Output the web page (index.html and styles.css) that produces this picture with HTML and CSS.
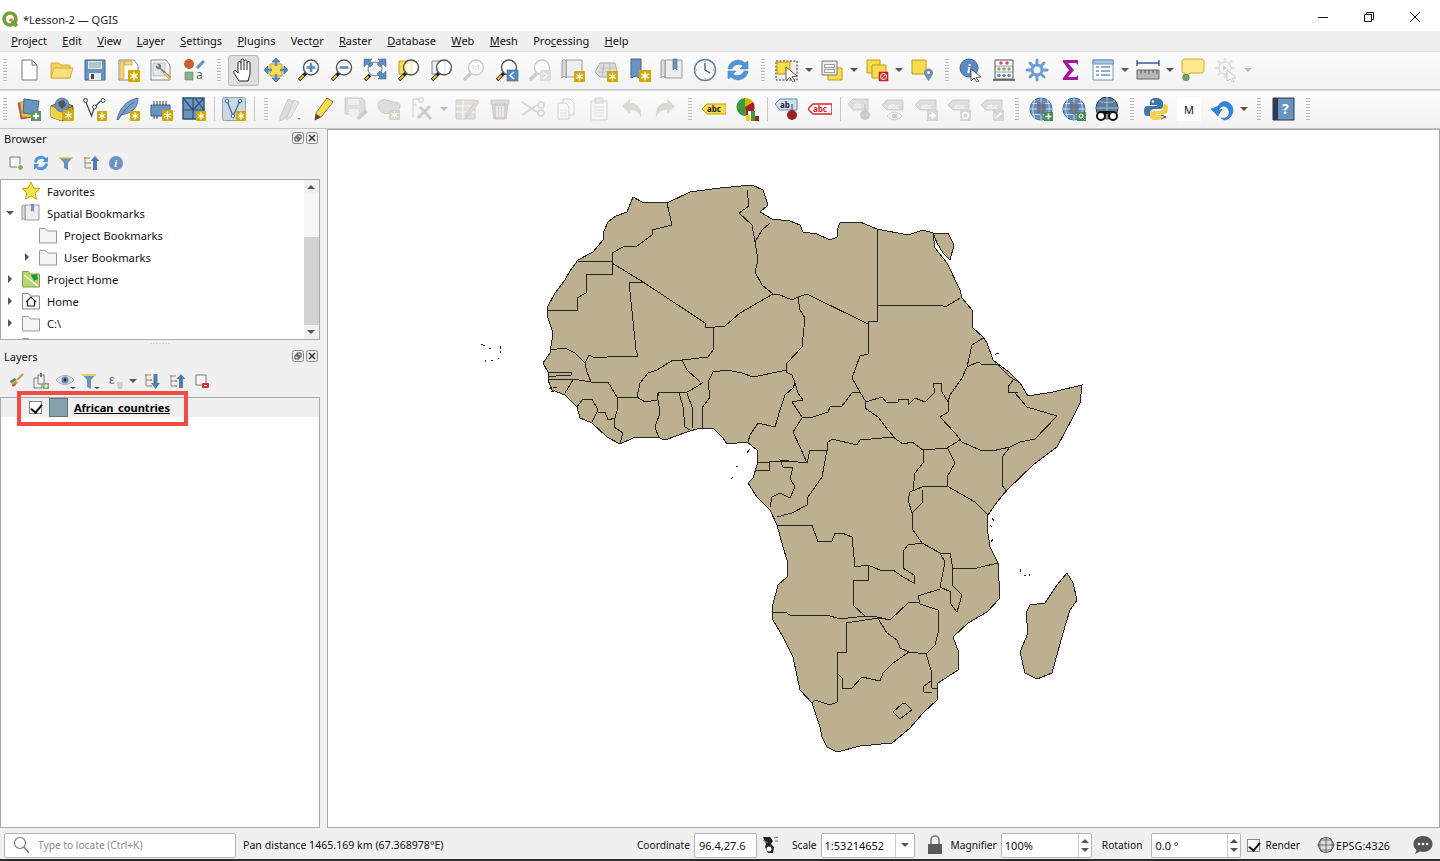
FILE: index.html
```html
<!DOCTYPE html>
<html lang="en">

<head>
    <meta charset="UTF-8">
    <title>*Lesson-2 — QGIS</title>
    <link rel="stylesheet" href="styles.css">
</head>

<body>
    <svg class="defs" width="0" height="0">
        <symbol id="sun" viewBox="0 0 11 11">
            <rect width="11" height="11" rx="1" fill="#d2a800" />
            <path d="M5.5 1.5v8M2 3.5l7 4M9 3.5l-7 4" stroke="#fff" stroke-width="1.3" />
        </symbol>
        <symbol id="mag" viewBox="0 0 24 24">
            <path d="M2 22l7-7" stroke="#222" stroke-width="3.4" />
            <path d="M2.6 21.4l4-4" stroke="#f0c832" stroke-width="2" />
            <circle cx="14" cy="9.500" r="7.500" fill="#fff" fill-opacity=".75" stroke="#555" stroke-width="1.400" />
        </symbol>
        <symbol id="magoff" viewBox="0 0 24 24">
            <path d="M2 22l7-7" stroke="#ccc" stroke-width="3.400" />
            <circle cx="14" cy="9.500" r="7.500" fill="#fafafa" stroke="#ccc" stroke-width="1.400" />
        </symbol>
        <symbol id="globe" viewBox="0 0 24 24">
            <circle cx="12" cy="12" r="11" fill="#5f8fc4" stroke="#4a6f9a" />
            <path d="M1 12h22M3 6.500h18M3 17.500h18M12 1v22M6 3c-3 5-3 13 0 18M18 3c3 5 3 13 0 18" stroke="#e2e8ee" stroke-width=".8" fill="none" />
            <path d="M8 5l8 1 1 6-4 7-5-4z" fill="#666" fill-opacity=".7" />
        </symbol>
        <symbol id="abcoff" viewBox="0 0 24 24">
            <path d="M1 8l5-5h16v10H6z" fill="#ddd" stroke="#ccc" />
        </symbol>
    </svg>

    <div class="app">
        <header class="titlebar">
            <svg class="app-logo" width="17" height="17" viewBox="0 0 17 17">
                <circle cx="8" cy="8" r="6" fill="none" stroke="#6ea33c" stroke-width="3.600" />
                <path d="M10 10l5 5" stroke="#6ea33c" stroke-width="3.400" />
                <circle cx="9" cy="9" r="1.800" fill="#ee7913" />
            </svg>
            <span class="title-text">*Lesson-2 — QGIS</span>
            <div class="window-btns">
                <svg width="12" height="12" viewBox="0 0 12 12"><path d="M1 6.500h10" stroke="#111" /></svg>
                <svg width="12" height="12" viewBox="0 0 12 12"><path d="M1.500 3.500h7v7h-7zM3.500 3.500v-2h7v7h-2" fill="none" stroke="#111" /></svg>
                <svg width="12" height="12" viewBox="0 0 12 12"><path d="M1 1l10 10M11 1L1 11" stroke="#111" /></svg>
            </div>
        </header>

        <nav class="menubar">
            <span><u>P</u>roject</span>
            <span><u>E</u>dit</span>
            <span><u>V</u>iew</span>
            <span><u>L</u>ayer</span>
            <span><u>S</u>ettings</span>
            <span><u>P</u>lugins</span>
            <span>Vect<u>o</u>r</span>
            <span><u>R</u>aster</span>
            <span><u>D</u>atabase</span>
            <span><u>W</u>eb</span>
            <span><u>M</u>esh</span>
            <span>Pro<u>c</u>essing</span>
            <span><u>H</u>elp</span>
        </nav>

        <div class="toolbar">
            <i class="grip"></i>
            <b class="tool"><svg viewBox="0 0 24 24"><path d="M5 2h10l5 5v15H5z" fill="#fff" stroke="#777" /><path d="M15 2v5h5" fill="none" stroke="#777" /></svg></b>
            <b class="tool"><svg viewBox="0 0 24 24"><path d="M1 20V5h8l2 2h9v13z" fill="#f3cf5f" stroke="#d6ae3c" /><path d="M1 20l3-10h19l-3 10z" fill="#fbdf7e" stroke="#d6ae3c" /></svg></b>
            <b class="tool"><svg viewBox="0 0 24 24"><path d="M2 2h20v20H2z" fill="#6b93c0" stroke="#3d6793" rx="2" /><path d="M5 3h14v8H5z" fill="#dfe6ee" /><path d="M6 5h12M6 7h12M6 9h12" stroke="#8aa" /><path d="M6 15h12v7H6z" fill="#e8e8e8" /><path d="M8 16h3v5H8z" fill="#444" /></svg></b>
            <b class="tool"><svg viewBox="0 0 24 24"><path d="M3 2h15l4 5v15H3z" fill="#fff" stroke="#888" /><path d="M4 3h4v18H4zM8 3h8v4H8z" fill="#f2d679" stroke="#c8a642" stroke-width=".7" /><use href="#sun" x="12" y="12" width="12" height="12" /></svg></b>
            <b class="tool"><svg viewBox="0 0 24 24"><path d="M2 2h15l4 5v15H2z" fill="#f8f8f8" stroke="#888" /><path d="M4 5h12v13H4z" fill="#dfe6ee" stroke="#9ab" stroke-width=".6" /><path d="M7 7a3 3 0 0 0 4 4l9 10 2-2-10-9a3 3 0 0 0-4-4l2 2-1 1z" fill="#777" /><path d="M15 15l6 6" stroke="#e6c44d" stroke-width="2.400" /></svg></b>
            <b class="tool"><svg viewBox="0 0 24 24"><circle cx="7" cy="6" r="5" fill="#c8602a" /><path d="M15 10l7-7" stroke="#5f8fc4" stroke-width="3" /><path d="M3 14h8v8H3z" fill="#8cb184" stroke="#678" stroke-width=".6" /><text x="14" y="21" class="icon-text-big" fill="#666">a</text></svg></b>
            <i class="grip"></i>
            <b class="tool active"><svg viewBox="0 0 24 24"><path d="M8 23l-5-8c-1-2 1-3 2-2l2 2V5c0-2 3-2 3 0V2.500c0-2 3-2 3 0V3.500c0-2 3-2 3 0V5c0-2 3-2 3 0v11l-2 7z" fill="#fff" stroke="#222" stroke-linejoin="round" /><path d="M10 5v7M13 4v8M16 5v7" stroke="#222" /></svg></b>
            <b class="tool"><svg viewBox="0 0 24 24"><path d="M6 6h12v12H6z" fill="#f7dc4d" stroke="#bf9d12" /><path d="M12 0l4 4h-8zM12 24l-4-4h8zM0 12l4-4v8zM24 12l-4 4v-8z" fill="#5c8bc0" stroke="#36618f" stroke-width=".7" /><path d="M12 4v4M12 16v4M4 12h4M16 12h4" stroke="#5c8bc0" stroke-width="2.400" /></svg></b>
            <b class="tool"><svg viewBox="0 0 24 24"><use href="#mag" width="24" height="24" /><path d="M14 5v9M9.500 9.500h9" stroke="#5c8bc0" stroke-width="2.600" /></svg></b>
            <b class="tool"><svg viewBox="0 0 24 24"><use href="#mag" width="24" height="24" /><path d="M9.500 9.500h9" stroke="#5c8bc0" stroke-width="2.600" /></svg></b>
            <b class="tool"><svg viewBox="0 0 24 24"><circle cx="12" cy="11" r="7" fill="#eef1f4" stroke="#777" /><path d="M2 22l5-5" stroke="#222" stroke-width="3.400" /><path d="M2.600 21.400l3-3" stroke="#f0c832" stroke-width="2" /><path d="M1 1h8L7 3l3 3-3 3-3-3-3 3zM23 1h-8l2 2-3 3 3 3 3-3 3 3zM23 21h-8l2-2-3-3 3-3 3 3 3-3z" fill="#5c8bc0" stroke="#36618f" stroke-width=".5" /></svg></b>
            <b class="tool"><svg viewBox="0 0 24 24"><path d="M3 3h13v13H3z" fill="#f7dc4d" stroke="#bf9d12" /><use href="#mag" x="1" width="24" height="24" /></svg></b>
            <b class="tool"><svg viewBox="0 0 24 24"><path d="M3 3h13v13H3z" fill="#eee" stroke="#888" /><use href="#mag" x="1" width="24" height="24" /></svg></b>
            <b class="tool"><svg viewBox="0 0 24 24"><use href="#magoff" width="24" height="24" /><text x="9" y="12" class="icon-text" fill="#ccc">1:1</text></svg></b>
            <b class="tool"><svg viewBox="0 0 24 24"><use href="#mag" width="24" height="24" /><path d="M12 12h11v11H12z" fill="#5c8bc0" stroke="#36618f" stroke-width=".6" /><path d="M19 14l-4 3.500 4 3.500" fill="none" stroke="#fff" stroke-width="1.500" /></svg></b>
            <b class="tool"><svg viewBox="0 0 24 24"><use href="#magoff" width="24" height="24" /><path d="M12 12h11v11H12z" fill="#ddd" /><path d="M15 14l4 3.500-4 3.500" fill="none" stroke="#fff" stroke-width="1.500" /></svg></b>
            <b class="tool"><svg viewBox="0 0 24 24"><path d="M5 2h16v17H5z" fill="#eee" stroke="#999" /><path d="M1 4c0-3 4-3 4 0v16c0-2-4-2-4 0z" fill="#ddd" stroke="#999" /><use href="#sun" x="13" y="13" width="11" height="11" /></svg></b>
            <b class="tool"><svg viewBox="0 0 24 24"><path d="M1 14l5-9h15l2 9-6 5H6z" fill="#ddd" stroke="#aaa" /><path d="M6 10l15 0M4 14l19 0M10 5l-2 14M16 5v14" stroke="#aaa" stroke-width=".6" /><use href="#sun" x="13" y="13" width="11" height="11" /></svg></b>
            <b class="tool"><svg viewBox="0 0 24 24"><path d="M4 1h10v20l-5-3-5 2z" fill="#6b93c0" stroke="#3d6793" /><use href="#sun" x="12" y="12" width="12" height="12" /></svg></b>
            <b class="tool"><svg viewBox="0 0 24 24"><path d="M5 2h17v18H5z" fill="#eee" stroke="#999" /><path d="M1 4c0-3 4-3 4 0v16c0-2-4-2-4 0z" fill="#ddd" stroke="#999" /><path d="M13 1h4v11l-2-2-2 2z" fill="#6b93c0" stroke="#3d6793" stroke-width=".6" /></svg></b>
            <b class="tool"><svg viewBox="0 0 24 24"><circle cx="12" cy="12" r="10.500" fill="#f6f8fb" stroke="#5e7f9f" stroke-width="1.400" /><path d="M12 5v7l5 3" fill="none" stroke="#444" stroke-width="1.200" /><path d="M12 3v1M12 20v1M3 12h1M20 12h1" stroke="#5e7f9f" /></svg></b>
            <b class="tool"><svg viewBox="0 0 24 24"><path d="M2 11A10 10 0 0 1 19 5l3-2v8h-8l3-3A7 7 0 0 0 6 11z" fill="#4f95d6" stroke="#3a78b4" stroke-width=".5" /><path d="M22 13A10 10 0 0 1 5 19l-3 2v-8h8l-3 3a7 7 0 0 0 11-3z" fill="#4f95d6" stroke="#3a78b4" stroke-width=".5" /></svg></b>
            <i class="grip"></i>
            <b class="tool"><svg viewBox="0 0 24 24"><path d="M1 3h21v19H1z" fill="#eee" stroke="#333" stroke-dasharray="2 1.500" /><path d="M2 4h13v12H2z" fill="#f7dc4d" stroke="#bf9d12" /><path d="M11 9l11 9-5 .5 3 5-2 1-3-5-4 3z" fill="#fff" stroke="#333" stroke-width=".8" /></svg></b>
            <b class="arrow"></b>
            <b class="tool"><svg viewBox="0 0 24 24"><path d="M8 10h14v12H8z" fill="#f7dc4d" stroke="#bf9d12" /><path d="M2 3h15v14H2z" fill="#eee" stroke="#777" /><path d="M4.500 6.500h10v3h-10zM4.500 11.500h10v3h-10z" fill="#fff" stroke="#777" stroke-width=".7" /></svg></b>
            <b class="arrow"></b>
            <b class="tool"><svg viewBox="0 0 24 24"><path d="M2 2h13v13H2z" fill="#f7dc4d" stroke="#bf9d12" /><path d="M7 7h14v13H7z" fill="#f7dc4d" stroke="#bf9d12" /><path d="M14 14h9v9h-9z" fill="#d9252a" stroke="#a11" stroke-width=".5" /><circle cx="18.500" cy="18.500" r="3" fill="none" stroke="#fff" /><path d="M16.500 20.500l4-4" stroke="#fff" /></svg></b>
            <b class="arrow"></b>
            <b class="tool"><svg viewBox="0 0 24 24"><path d="M2 2h14v14H2z" fill="#f7dc4d" stroke="#bf9d12" /><path d="M18.500 23l-4-6a4.500 4.500 0 1 1 8 0z" fill="#6b8fb5" /><circle cx="18.500" cy="14.500" r="1.500" fill="#fff" /></svg></b>
            <i class="grip"></i>
            <b class="tool"><svg viewBox="0 0 24 24"><circle cx="10" cy="10" r="9" fill="#5c8bc0" stroke="#3d6793" /><text x="8" y="15" class="icon-text-i" fill="#fff">i</text><path d="M12 11l10 8-5 .5 3 4-2 .5-3-4-3 3z" fill="#fff" stroke="#333" stroke-width=".8" /></svg></b>
            <b class="tool"><svg viewBox="0 0 24 24"><path d="M3 2h18v19H3z" fill="#fff" stroke="#555" /><path d="M1 22h22" stroke="#555" stroke-width="1.500" /><path d="M3 8h18M3 14h18" stroke="#555" stroke-width=".6" /><circle cx="9" cy="5" r="1.800" fill="#d9534f" /><circle cx="15" cy="5" r="1.800" fill="#d9534f" /><circle cx="7" cy="11" r="1.800" fill="#7fb069" /><circle cx="12" cy="11" r="1.800" fill="#7fb069" /><circle cx="17" cy="11" r="1.800" fill="#7fb069" /><circle cx="7" cy="17.500" r="1.800" fill="#5c8bc0" /><circle cx="12" cy="17.500" r="1.800" fill="#5c8bc0" /><circle cx="17" cy="17.500" r="1.800" fill="#5c8bc0" /></svg></b>
            <b class="tool"><svg viewBox="0 0 24 24"><path d="M12 2v20M2 12h20M5 5l14 14M19 5L5 19" stroke="#6f9bd0" stroke-width="3" stroke-linecap="round" /><circle cx="12" cy="12" r="6.500" fill="#6f9bd0" /><circle cx="12" cy="12" r="3.500" fill="#eef3f8" /></svg></b>
            <b class="tool"><svg viewBox="0 0 24 24"><path d="M5 2h15v5l-2-2H10l6 7-6 7h8l2-2v5H5v-2l6-8-6-8z" fill="#a3179c" /></svg></b>
            <b class="tool"><svg viewBox="0 0 24 24"><path d="M2 2h20v20H2z" fill="#fff" stroke="#6b93c0" /><path d="M2 2h20v4H2z" fill="#a8c3e0" stroke="#6b93c0" /><path d="M5 9h3M5 13h3M5 17h3M10 9h9M10 13h9M10 17h9" stroke="#6b93c0" stroke-width="1.500" /></svg></b>
            <b class="arrow"></b>
            <b class="tool"><svg viewBox="0 0 24 24"><path d="M1 5h22M1 2v6M23 2v6" stroke="#36618f" stroke-width="1.400" /><path d="M1 12h22v9H1z" fill="#b8b8b8" stroke="#666" /><path d="M5 12v4M9 12v3M13 12v4M17 12v3M21 12v4" stroke="#444" stroke-width=".8" /></svg></b>
            <b class="arrow"></b>
            <b class="tool"><svg viewBox="0 0 24 24"><path d="M4 1h16c2 0 3 1 3 3v8c0 2-1 3-3 3H9l-5 3v-3H3c-2 0-2-1-2-3V4c0-2 1-3 3-3z" fill="#fbe98d" stroke="#d1a822" /><circle cx="5" cy="19.500" r="3.300" fill="#74a36a" stroke="#4f7a47" stroke-width=".6" /></svg></b>
            <b class="tool"><svg viewBox="0 0 24 24"><path d="M11 1v18M2 10h18M4.500 3.500l13 13M17.500 3.500l-13 13" stroke="#e2e2e2" stroke-width="2.600" stroke-linecap="round" /><circle cx="11" cy="10" r="6" fill="#f4f4f4" stroke="#d6d6d6" /><path d="M9 7.500v5l4-2.500z" fill="#ccc" /><path d="M13 12l9 8-4 .5 2 3-2 .5-2-3-3 2z" fill="#fafafa" stroke="#bbb" stroke-width=".8" /></svg></b>
            <b class="arrow off"></b>
        </div>

        <div class="toolbar">
            <i class="grip"></i>
            <b class="tool"><svg viewBox="0 0 24 24"><path d="M1 6l12-2 3 16-12 2z" fill="#c8532e" stroke="#8a3c22" stroke-width=".6" /><path d="M3 5l13-1 2 16H5z" fill="#ecc14a" stroke="#a98c2a" stroke-width=".6" /><path d="M7 2l15 2-2 14-14-2z" fill="#6b93c0" stroke="#3d6793" /><path d="M14 14h10v10H14z" fill="#5d9a62" /><path d="M19 16v6M16 19h6" stroke="#fff" stroke-width="2" /></svg></b>
            <b class="tool"><svg viewBox="0 0 24 24"><path d="M1 9l11-5 11 5v11l-11 4-11-4z" fill="#d1ad1e" stroke="#333" stroke-width=".8" /><path d="M1 9l11 5 11-5" fill="none" stroke="#333" stroke-width=".8" /><path d="M12 14v10L1 20V9z" fill="#f0d13f" /><circle cx="12" cy="8" r="7" fill="#6b93c0" stroke="#4a6f9a" stroke-width=".7" /><path d="M8 5l6-2 2 5-4 4-3-3z" fill="#555" /><use href="#sun" x="13" y="13" width="11" height="11" /></svg></b>
            <b class="tool"><svg viewBox="0 0 24 24"><path d="M2.500 4l6 15 3-9 6-6" fill="none" stroke="#444" stroke-width="1.200" /><circle cx="2.500" cy="3.500" r="2" fill="#fff" stroke="#444" /><circle cx="11.500" cy="10" r="2" fill="#fff" stroke="#444" /><circle cx="20" cy="3.500" r="2" fill="#fff" stroke="#444" /><use href="#sun" x="14" y="14" width="10" height="10" /></svg></b>
            <b class="tool"><svg viewBox="0 0 24 24"><path d="M1 23C3 12 10 3 22 1c0 8-4 14-13 16l-4 1z" fill="#7ba0c9" stroke="#41678f" stroke-width=".8" /><path d="M2 23C7 15 11 10 18 5" stroke="#41678f" fill="none" /><use href="#sun" x="14" y="14" width="10" height="10" /></svg></b>
            <b class="tool"><svg viewBox="0 0 24 24"><path d="M2 8h19v11H2z" fill="#6b93c0" stroke="#36618f" /><path d="M5 4v4M8 4v4M11 4v4M14 4v4M17 4v4M5 19v3M8 19v3" stroke="#444" /><use href="#sun" x="13" y="13" width="11" height="11" /></svg></b>
            <b class="tool"><svg viewBox="0 0 24 24"><path d="M1 1h21v21H1z" fill="#6b93c0" stroke="#2f4f72" stroke-width="1.400" /><path d="M1 13h21M11 1v21M1 1l10 12L22 1M13 1l9 12" fill="none" stroke="#2f4f72" stroke-width="1.200" /><use href="#sun" x="14" y="14" width="10" height="10" /></svg></b>
            <i class="sep"></i>
            <b class="tool"><svg viewBox="0 0 24 24"><rect x=".5" y=".5" width="23" height="23" rx="2" fill="#cbd8e4" stroke="#8ba3ba" /><path d="M5 4l6 15 7-15" fill="none" stroke="#36618f" stroke-width="1.200" /><circle cx="5" cy="4" r="1.800" fill="#fff" stroke="#36618f" /><circle cx="18" cy="4" r="1.800" fill="#fff" stroke="#36618f" /><circle cx="11" cy="19" r="1.800" fill="#fff" stroke="#36618f" /><use href="#sun" x="14" y="14" width="10" height="10" /></svg></b>
            <i class="sep"></i>
            <i class="grip"></i>
            <b class="tool"><svg viewBox="0 0 24 24"><path d="M2 20L10 2l5 2-7 17-6 3z" fill="#ddd" stroke="#ccc" /><path d="M9 20l7-17 5 2-8 15-4 3z" fill="#e6e6e6" stroke="#ccc" /><path d="M19 21h4l-2 2z" fill="#999" /></svg></b>
            <b class="tool"><svg viewBox="0 0 24 24"><path d="M4 23l1-7L16 1l6 4L10 20z" fill="#f7dc4d" stroke="#8d7b27" /><path d="M4 23l1-6 5 3z" fill="#444" /></svg></b>
            <b class="tool"><svg viewBox="0 0 24 24"><path d="M1 1h17l3 3v13H1z" fill="#ddd" stroke="#ccc" /><path d="M4 2h11v6H4z" fill="#eee" /><path d="M5 12h10v8H5z" fill="#eee" /><path d="M12 21l9-9 3 3-9 8z" fill="#ccc" /></svg></b>
            <b class="tool"><svg viewBox="0 0 24 24"><path d="M1 8c0-6 7-6 12-4s10 0 10 5-5 6-9 7-12 2-13-8z" fill="#ddd" stroke="#ccc" /><path d="M12 13h11v10H12z" fill="#d8d5c8" /><path d="M17.500 14v8M14 16l7 4M21 16l-7 4" stroke="#fff" /></svg></b>
            <b class="tool"><svg viewBox="0 0 24 24"><path d="M3 2v18M3 2h6M3 8h4" stroke="#ccc" fill="none" /><circle cx="11" cy="3" r="2.400" fill="none" stroke="#ccc" /><path d="M8 21L20 9M10 10l11 12" stroke="#ccc" stroke-width="3" /></svg></b>
            <b class="arrow off"></b>
            <b class="tool"><svg viewBox="0 0 24 24"><path d="M1 3h19v19H1z" fill="#e2e0d5" stroke="#ccc" /><path d="M1 9h19M1 15h19M8 3v19" stroke="#f8f8f8" /><path d="M11 21l1-5 10-13 2 2-10 13z" fill="#ddd" stroke="#ccc" /></svg></b>
            <b class="tool"><svg viewBox="0 0 24 24"><path d="M4 7h16l-2 15H6z" fill="#d8d0c8" stroke="#ccc" /><path d="M3 3h18v4H3z" fill="#ddd" stroke="#ccc" /><path d="M9 9v11M12 9v11M15 9v11" stroke="#f5f5f5" stroke-width="1.400" /></svg></b>
            <b class="tool"><svg viewBox="0 0 24 24"><path d="M1 5l15 10M1 18L16 8" stroke="#d5d5d5" stroke-width="2" /><circle cx="20" cy="8" r="3" fill="none" stroke="#d5d5d5" stroke-width="1.600" /><circle cx="20" cy="16" r="3" fill="none" stroke="#d5d5d5" stroke-width="1.600" /></svg></b>
            <b class="tool"><svg viewBox="0 0 24 24"><path d="M9 2h7l4 4v12H9z" fill="#f8f8f8" stroke="#d0d0d0" /><path d="M4 6h8l3 4v12H4z" fill="#f8f8f8" stroke="#d0d0d0" /><path d="M6 13h7M6 16h7M6 19h7" stroke="#ddd" /></svg></b>
            <b class="tool"><svg viewBox="0 0 24 24"><path d="M4 4h16v19H4z" fill="#f6f6f6" stroke="#d0d0d0" /><path d="M8 1h8v5H8z" fill="#e6e6e6" stroke="#d0d0d0" /><path d="M7 10h10M7 13h10M7 16h10M7 19h10" stroke="#ddd" /></svg></b>
            <b class="tool"><svg viewBox="0 0 24 24"><path d="M2 9l8-7v4c8 0 12 5 11 15-2-6-5-8-11-8v4z" fill="#dcd9d2" /></svg></b>
            <b class="tool"><svg viewBox="0 0 24 24"><path d="M22 9l-8-7v4C6 6 2 11 3 21c2-6 5-8 11-8v4z" fill="#dcd9d2" /></svg></b>
            <i class="grip"></i>
            <b class="tool"><svg viewBox="0 0 24 24"><path d="M0 12l5-5h19v10H5z" fill="#f7dc4d" stroke="#c3a312" /><text x="5" y="15" class="icon-text-bold" fill="#222">abc</text></svg></b>
            <b class="tool"><svg viewBox="0 0 24 24"><path d="M10 10V1a9 9 0 0 1 8 4z" fill="#d4b800" /><path d="M10 10l8-5a9 9 0 0 1 1 8v1h-6v5H11z" fill="#a61e1e" /><path d="M10 10l1 9A9 9 0 0 1 10 1z" fill="#3c9a3c" /><path d="M11 18h4v6h-4z" fill="#f4cf25" /><path d="M16 14h4v10h-4z" fill="#3f9a3f" /><path d="M20 19h4v5h-4z" fill="#a61e1e" /></svg></b>
            <i class="sep"></i>
            <b class="tool"><svg viewBox="0 0 24 24"><path d="M0 7l5-5h17v11H5z" fill="#cfe0f3" stroke="#5c8bc0" /><text x="5" y="10.800" class="icon-text-bold" fill="#222">ab</text><path d="M17 7v10" stroke="#888" stroke-width="2" /><circle cx="17" cy="18" r="5" fill="#9b2226" /></svg></b>
            <b class="tool"><svg viewBox="0 0 24 24"><path d="M0 12l5-5h19v10H5z" fill="#fff" stroke="#e2202a" stroke-width="1.400" /><text x="5" y="15" class="icon-text-bold" fill="#d9181f">abc</text></svg></b>
            <i class="sep"></i>
            <b class="tool"><svg viewBox="0 0 24 24"><path d="M0 7l5-5h15v11H5z" fill="#ddd" stroke="#ccc" /><text x="5.500" y="10.800" class="icon-text" fill="#fff">ab</text><path d="M17 7v10" stroke="#ccc" stroke-width="2" /><circle cx="17" cy="18" r="5" fill="#ccc" /></svg></b>
            <b class="tool"><svg viewBox="0 0 24 24"><use href="#abcoff" width="24" height="24" /><text x="7" y="11.500" class="icon-text" fill="#fff">abc</text><path d="M6 19c4-5 11-5 15 0-4 5-11 5-15 0z" fill="#f4f4f4" stroke="#ccc" /><circle cx="13.500" cy="19" r="2.500" fill="#ccc" /></svg></b>
            <b class="tool"><svg viewBox="0 0 24 24"><use href="#abcoff" width="24" height="24" /><text x="7" y="11.500" class="icon-text" fill="#fff">abc</text><path d="M13 13h11v11H13z" fill="#d5d5d5" /><path d="M15 18.500h4M17.500 15.500l3.500 3-3.500 3" stroke="#fff" stroke-width="2" fill="none" /></svg></b>
            <b class="tool"><svg viewBox="0 0 24 24"><use href="#abcoff" width="24" height="24" /><text x="7" y="11.500" class="icon-text" fill="#fff">abc</text><path d="M13 13h11v11H13z" fill="#d5d5d5" /><circle cx="18.500" cy="18.500" r="3" fill="none" stroke="#fff" stroke-width="1.600" /></svg></b>
            <b class="tool"><svg viewBox="0 0 24 24"><use href="#abcoff" width="24" height="24" /><text x="7" y="11.500" class="icon-text" fill="#fff">abc</text><path d="M13 13h11v11H13z" fill="#d5d5d5" /><path d="M15 22l1-3 5-4 1 2-5 4z" fill="#fff" /></svg></b>
            <i class="grip"></i>
            <b class="tool"><svg viewBox="0 0 24 24"><use href="#globe" width="24" height="24" /><path d="M15 15h9v9h-9z" fill="#4b8a52" /><path d="M19.500 16.500v6M16.500 19.500h6" stroke="#fff" stroke-width="1.600" /></svg></b>
            <b class="tool"><svg viewBox="0 0 24 24"><use href="#globe" width="24" height="24" /><path d="M15 15h9v9h-9z" fill="#4b8a52" /><circle cx="19" cy="19" r="2" fill="none" stroke="#fff" /><path d="M20.500 20.500l2 2" stroke="#fff" /></svg></b>
            <b class="tool"><svg viewBox="0 0 24 24"><circle cx="12" cy="11" r="11" fill="#5b7d9e" stroke="#2b3d50" /><path d="M1 11h22M12 0v22M4 4c4 2 12 2 16 0M4 18c4-2 12-2 16 0" stroke="#c9d4de" stroke-width=".7" fill="none" /><path d="M6 14h12v3H6z" fill="#111" /><circle cx="6" cy="19" r="4" fill="#fff" stroke="#111" stroke-width="2" /><circle cx="18" cy="19" r="4" fill="#fff" stroke="#111" stroke-width="2" /></svg></b>
            <i class="grip"></i>
            <b class="tool"><svg viewBox="0 0 24 24"><path d="M12 1c-5 0-6 2-6 5v2h7v1H4c-3 0-4 2-4 5s1 5 4 5h2v-3c0-3 2-4 5-4h5c2 0 3-1 3-3V6c0-3-3-5-7-5z" fill="#3f78a8" /><circle cx="9" cy="4.500" r="1.200" fill="#fff" /><path d="M19 7v3c0 3-2 4-5 4H9c-2 0-3 1-3 3v3c0 2 3 3 6 3 4 0 6-1 6-4v-1h-6v-1h8c3 0 4-2 4-5s-1-5-4-5z" fill="#f6d04d" /><path d="M17 18l5 2-5 2" fill="none" stroke="#444" /></svg></b>
            <b class="tool plugin-m"><span>M</span></b>
            <b class="tool"><svg viewBox="0 0 24 24"><path d="M1 12l8-3-1 3a8 8 0 0 1 4-7c5-2 11 2 11 8 0 5-4 10-9 10l-3-2c5 1 9-2 8-7-1-4-5-6-8-4-1 1-2 2-2 3l3-1-4 7z" fill="#2f86de" stroke="#1f64ad" stroke-width=".5" /></svg></b>
            <b class="arrow"></b>
            <i class="grip"></i>
            <b class="tool"><svg viewBox="0 0 24 24"><path d="M2 1h21v22H2z" fill="#6b93c0" stroke="#2b3d50" /><path d="M2 1h5v22H2z" fill="#2b3d50" /><text x="11" y="17" class="icon-text-q" fill="#fff">?</text></svg></b>
            <i class="grip"></i>
        </div>

        <main class="workspace">
            <aside class="side">
                <section class="dock browser-dock">
                    <div class="dock-title">
                        <span>Browser</span>
                        <div class="dock-btns">
                            <svg width="12" height="12" viewBox="0 0 12 12"><rect x=".5" y=".5" width="11" height="11" rx="2" fill="#eee" stroke="#888" /><path d="M5 3h4v4H5zM3 5h4v4H3z" fill="none" stroke="#444" /></svg>
                            <svg width="12" height="12" viewBox="0 0 12 12"><rect x=".5" y=".5" width="11" height="11" rx="2" fill="#eee" stroke="#888" /><path d="M3 3l6 6M9 3L3 9" stroke="#333" stroke-width="1.500" /></svg>
                        </div>
                    </div>
                    <div class="dock-tools">
                        <b class="dtool"><svg viewBox="0 0 16 16"><path d="M2 2h10v10H2z" fill="#f7f7f7" stroke="#777" /><circle cx="12.500" cy="12.500" r="3" fill="#7fb069" stroke="#fff" /></svg></b>
                        <b class="dtool"><svg viewBox="0 0 16 16"><path d="M1 7.500A7 7 0 0 1 13 3l2-1.500V7h-5.500L11.500 5A4.500 4.500 0 0 0 4 7.500zM15 8.500A7 7 0 0 1 3 13l-2 1.500V9h5.500L4.500 11a4.500 4.500 0 0 0 7.500-2.500z" fill="#4f95d6" /></svg></b>
                        <b class="dtool"><svg viewBox="0 0 16 16"><path d="M1 2h14L10 8v7L6 13V8z" fill="#6b93c0" /><path d="M1 2h14v1.500H1z" fill="#e4d25a" /></svg></b>
                        <b class="dtool"><svg viewBox="0 0 16 16"><path d="M2 3h5M2 3v10h5M2 8h5" fill="none" stroke="#888" /><path d="M1 2h2v2H1zM6 7h2v2H6zM6 12h2v2H6z" fill="#e9923a" /><path d="M10 15V6H7.500L12 1l4.500 5H14v9z" fill="#4f7fb0" /></svg></b>
                        <b class="dtool"><svg viewBox="0 0 16 16"><circle cx="8" cy="8" r="7" fill="#6b93c0" /><text x="6.300" y="12" class="icon-text-i2" fill="#fff">i</text></svg></b>
                    </div>
                    <div class="tree browser-tree">
                        <div class="tree-rows">
                            <div class="row">
                                <i class="twist"></i>
                                <svg class="ti" viewBox="0 0 20 20"><path d="M10 1l2.700 6 6.300.6-4.800 4.300 1.400 6.400L10 15l-5.600 3.300 1.400-6.400L1 7.600 7.300 7z" fill="#f7e34c" stroke="#c3a312" /></svg>
                                <span>Favorites</span>
                            </div>
                            <div class="row">
                                <i class="twist down"></i>
                                <svg class="ti" viewBox="0 0 20 20"><path d="M4 2h14v15H4z" fill="#eee" stroke="#999" /><path d="M1 4c0-3 3-3 3 0v13c0-2-3-2-3 0z" fill="#ddd" stroke="#999" /><path d="M10 1h3v8l-1.500-1.500L10 9z" fill="#6b93c0" /></svg>
                                <span>Spatial Bookmarks</span>
                            </div>
                            <div class="row sub">
                                <i class="twist"></i>
                                <svg class="ti" viewBox="0 0 20 20"><path d="M1.500 3.500h6l2 2.500h9v12h-17z" fill="#f5f5f5" stroke="#999" /></svg>
                                <span>Project Bookmarks</span>
                            </div>
                            <div class="row sub">
                                <i class="twist right"></i>
                                <svg class="ti" viewBox="0 0 20 20"><path d="M1.500 3.500h6l2 2.500h9v12h-17z" fill="#f5f5f5" stroke="#999" /></svg>
                                <span>User Bookmarks</span>
                            </div>
                            <div class="row">
                                <i class="twist right"></i>
                                <svg class="ti" viewBox="0 0 20 20"><path d="M1.500 2.500h6l2 2.500h9v13h-17z" fill="#b4d56f" stroke="#8a9a55" /><path d="M3 6l14 11" stroke="#fff" stroke-width="1.500" /><path d="M10 6l6-1 1 5-4 2z" fill="#1a9a3c" /></svg>
                                <span>Project Home</span>
                            </div>
                            <div class="row">
                                <i class="twist right"></i>
                                <svg class="ti" viewBox="0 0 20 20"><path d="M1.500 2.500h6l2 2.500h9v13h-17z" fill="#f5f5f5" stroke="#888" /><path d="M5 11l5-5 5 5M6.500 10v5h7v-5" fill="none" stroke="#222" stroke-width="1.200" /></svg>
                                <span>Home</span>
                            </div>
                            <div class="row">
                                <i class="twist right"></i>
                                <svg class="ti" viewBox="0 0 20 20"><path d="M1.500 3.500h6l2 2.500h9v12h-17z" fill="#f5f5f5" stroke="#999" /></svg>
                                <span>C:\</span>
                            </div>
                            <div class="row">
                                <i class="twist"></i>
                                <svg class="ti" viewBox="0 0 20 20"><path d="M1.500 3.500h6l2 2.500h9v12h-17z" fill="#f5f5f5" stroke="#999" /></svg>
                            </div>
                        </div>
                        <div class="scrollbar">
                            <i class="sb-btn up"></i>
                            <i class="sb-thumb"></i>
                            <i class="sb-track"></i>
                            <i class="sb-btn dn"></i>
                        </div>
                    </div>
                </section>
                <div class="h-split"></div>
                <section class="dock layers-dock">
                    <div class="dock-title">
                        <span>Layers</span>
                        <div class="dock-btns">
                            <svg width="12" height="12" viewBox="0 0 12 12"><rect x=".5" y=".5" width="11" height="11" rx="2" fill="#eee" stroke="#888" /><path d="M5 3h4v4H5zM3 5h4v4H3z" fill="none" stroke="#444" /></svg>
                            <svg width="12" height="12" viewBox="0 0 12 12"><rect x=".5" y=".5" width="11" height="11" rx="2" fill="#eee" stroke="#888" /><path d="M3 3l6 6M9 3L3 9" stroke="#333" stroke-width="1.500" /></svg>
                        </div>
                    </div>
                    <div class="dock-tools">
                        <b class="dtool"><svg viewBox="0 0 16 16"><path d="M2 8l5-3 3 5-5 3z" fill="#d8a13a" /><path d="M2 8l5-3 1 2-5 3z" fill="#4f7fb0" /><path d="M4 12l3-2 1 2-3 2z" fill="#c8532e" /><path d="M9 7l6-6" stroke="#b59a5a" stroke-width="2" /></svg></b>
                        <b class="dtool"><svg viewBox="0 0 16 16"><path d="M1 5h8v10H1z" fill="#f4f4f4" stroke="#777" /><path d="M5 2h6v9H5z" fill="#f4f4f4" stroke="#777" /><path d="M7 0h2v4H7z" fill="#777" /><path d="M10 10h6v6h-6z" fill="#7fb069" /><path d="M13 11v4M11 13h4" stroke="#fff" /></svg></b>
                        <b class="dtool wide"><svg viewBox="0 0 20 16"><path d="M0 7c5-6 13-6 18 0-5 6-13 6-18 0z" fill="#ddd" stroke="#aaa" /><circle cx="9" cy="7" r="3.500" fill="#5d8ab8" /><circle cx="9" cy="7" r="1.400" fill="#222" /><path d="M14 14h6l-3 2z" fill="#444" /></svg></b>
                        <b class="dtool wide"><svg viewBox="0 0 20 16"><path d="M1 1h14L10 7v9L6 14V7z" fill="#6b93c0" /><path d="M1 1h14v2H1z" fill="#e4d25a" /><path d="M13 14h6l-3 2z" fill="#444" /></svg></b>
                        <b class="dtool"><svg viewBox="0 0 16 16"><text x="1" y="11" class="icon-epsilon" fill="#7b4f9b">ε</text><path d="M9 9h6l-1 7h-4z" fill="#ccc" /></svg></b>
                        <b class="arrow small"></b>
                        <b class="dtool"><svg viewBox="0 0 16 16"><path d="M2 2h5M2 2v11h5M2 7h5" fill="none" stroke="#888" /><path d="M1 1h2v2H1zM6 6h2v2H6zM6 12h2v2H6z" fill="#e9923a" /><path d="M9.500 1h4v9h2.500L11.500 16 7 10h2.500z" fill="#4f7fb0" /></svg></b>
                        <b class="dtool"><svg viewBox="0 0 16 16"><path d="M2 3h5M2 3v10h5M2 8h5" fill="none" stroke="#888" /><path d="M1 2h2v2H1zM6 7h2v2H6zM6 12h2v2H6z" fill="#e9923a" /><path d="M10 15V6H7.500L12 1l4.500 5H14v9z" fill="#4f7fb0" /></svg></b>
                        <b class="dtool"><svg viewBox="0 0 16 16"><path d="M2 2h10v10H2z" fill="#f7f7f7" stroke="#777" /><rect x="8" y="10" width="7" height="5" rx="1" fill="#d9302b" /><path d="M10 12.500h3" stroke="#fff" /></svg></b>
                    </div>
                    <div class="tree layers-tree">
                        <div class="layer-row">
                            <i class="check"></i>
                            <i class="swatch"></i>
                            <span class="layer-name">African_countries</span>
                        </div>
                    </div>
                </section>
                <div class="highlight"></div>
            </aside>
            <div class="v-split"></div>
            <div class="canvas">
                <svg class="map" width="1112" height="698" viewBox="328 129 1112 698">
                    <g class="land">
                        <path d="M633 197L627 212L616 216L608 222L604 231L603 240L593 252L578 260L570 271L565 280L555 293L547 308L547 315L553 333L550 353L543 363L548 372L548 380L552 390L565 395L577 407L580 418L592 423L607 437L620 444L633 438L657 437L665 440L687 432L700 428L713 428L723 438L727 444L747 442L757 450L758 462L753 478L748 483L757 497L770 510L777 525L783 547L788 563L787 577L778 585L772 608L773 620L783 637L793 657L800 690L812 703L820 727L822 737L827 747L837 752L860 746L892 743L910 728L923 713L937 700L938 683L958 670L959 653L953 637L968 623L987 612L1000 598L998 563L990 547L987 527L988 515L997 502L1007 490L1033 465L1057 447L1073 417L1080 403L1082 385L1053 392L1028 396L1020 383L1010 373L993 360L987 343L983 337L973 328L972 310L962 298L960 290L947 263L935 248L933 233L923 230L908 235L877 229L860 222L840 223L837 230L837 237L830 240L817 234L803 232L800 225L790 221L772 219L760 212L768 205L763 190L752 185L720 188L690 192L667 203L642 202z" />
                        <path d="M933 233L948 233L954 245L950 260L943 253L937 243z" />
                        <path d="M1067 573L1073 583L1077 600L1070 610L1063 633L1052 673L1037 679L1025 673L1020 652L1028 633L1026 613L1030 605L1045 603L1057 585z" />
                    </g>
                    <g class="borders">
                        <path d="M578 261H612M612 261V253L623 247L637 246L652 235L652 230L672 225L667 203" />
                        <path d="M612 261V274H586V293L577 298V310H547" />
                        <path d="M612 263L643 282L690 313L705 323L706 328L725 326L740 313L773 294" />
                        <path d="M643 282H629L636 350L638 356L607 357L595 358L589 355L585 363" />
                        <path d="M550 350L565 348L575 353L585 363L587 372L591 382L573 379L548 380" />
                        <path d="M549 372H571L571 375L556 376L549 377" />
                        <path d="M591 382L608 382L617 397L637 397L640 383L648 373L657 370L673 360L682 360L708 357L713 350V328" />
                        <path d="M565 393L573 380" />
                        <path d="M577 407L582 400L592 399L598 410L592 422" />
                        <path d="M598 412L605 412L608 420L615 418L618 407L617 397" />
                        <path d="M615 418L614 427L623 433L620 443" />
                        <path d="M637 397L645 402L657 400L659 392L687 392L698 386L703 382" />
                        <path d="M682 360L687 370L698 380L700 382" />
                        <path d="M679 392L683 407L685 427L690 430" />
                        <path d="M657 393L660 413L655 427L659 438" />
                        <path d="M687 393L692 407L693 428" />
                        <path d="M702 428V408L710 397L708 382L713 372L727 370L742 373L753 377L787 370" />
                        <path d="M773 294L780 295L792 300L798 297L807 294L868 324" />
                        <path d="M877 229V321H868V354L860 356L852 378L860 392L866 402" />
                        <path d="M877 305H941L945 307L952 303L960 298" />
                        <path d="M747 190L749 206L739 213L752 225L755 242L762 230L770 223" />
                        <path d="M755 242L758 260L755 272L762 285L773 294" />
                        <path d="M798 297L800 310L805 318L802 347L787 363L786 372L792 375L795 383L798 393L803 400L792 402L802 417" />
                        <path d="M795 383L793 388L785 395L780 410L775 427L758 423L750 435L748 442" />
                        <path d="M802 418L813 417L828 412L830 407L842 406L852 393L860 392" />
                        <path d="M866 402L865 408L878 417L888 430L895 438" />
                        <path d="M802 418L793 432L800 447L807 463" />
                        <path d="M807 463L810 450H827V443L832 439L857 445L860 440L893 437L903 444L912 442L923 450L947 448L960 440" />
                        <path d="M866 402L882 397L887 403L898 402V399H908V405L915 398L925 402L935 392L933 384L941 383L942 392L948 402V412L940 417" />
                        <path d="M948 402L950 395L962 378L967 367L972 345L983 338" />
                        <path d="M967 367L978 362L983 365L997 364L1010 377L1020 383" />
                        <path d="M1013 380L1008 387V392H1018" />
                        <path d="M1015 393L1027 407L1057 416L1035 439L1020 442L1010 447L992 451L980 450L962 442L955 433L940 417" />
                        <path d="M1010 447L1002 457V485L1007 492" />
                        <path d="M947 447L955 463L947 477V486L975 502L988 515" />
                        <path d="M922 486H947" />
                        <path d="M923 450V463L915 473L913 490" />
                        <path d="M922 487L910 492L908 500L912 513L922 503V490" />
                        <path d="M912 513L913 530L922 543L940 553H950L953 569L977 568L998 563" />
                        <path d="M922 543L908 545L904 550L903 568L914 575V583L903 577L893 570H880L868 565L855 567L852 537L842 533H835L832 541L818 542L812 525H778" />
                        <path d="M868 565V580H853V605L865 616" />
                        <path d="M940 553L945 562L940 587L951 592" />
                        <path d="M950 553L953 569L952 585L962 595L957 612L950 603L951 592" />
                        <path d="M940 589L918 596L920 604" />
                        <path d="M920 602L908 603L890 620L873 616L865 616" />
                        <path d="M773 613L785 612L790 615H827L840 619L865 616" />
                        <path d="M846 623V652H837V702L830 705L815 700L812 703" />
                        <path d="M846 623L865 620L880 618L890 620" />
                        <path d="M877 617L887 633L897 640L900 648L909 652L926 654" />
                        <path d="M920 604L938 610V633L935 645L926 654" />
                        <path d="M909 652L893 663L883 673L880 681L862 677L852 688L843 689L842 678L837 673" />
                        <path d="M926 654L931 670L932 688L938 689" />
                        <path d="M932 680L923 687L924 692H932" />
                        <path d="M902 704L893 712L900 719L912 710L905 703z" />
                        <path d="M827 450L822 477L808 497L807 505L792 513L777 517" />
                        <path d="M770 507L772 497L780 493L790 498L795 487L790 478L793 468L783 467L780 460L807 463" />
                        <path d="M757 462H769V470H755M769 461H790" />
                    </g>
                    <g class="islands">
                        <path d="M481 344l4 2M489 348l2 0M500 346v3M500 351l1 2M485 362l1-2M491 360l2 0M498 358l1 1" />
                        <path d="M549 388l3 0M551 391l3 1M553 388l4-1" />
                        <path d="M750 449l-3 4M738 466l-2 1M733 477l-2 2" />
                        <path d="M992 518l2 3M990 525l2 2M993 539l-2 3" />
                        <path d="M1020 569l1 3M1024 575l2 1M1029 574l0 2" />
                        <path d="M995 355l2 -2l2 1" />
                    </g>
                </svg>
            </div>
        </main>

        <footer class="statusbar">
            <div class="locator">
                <svg width="18" height="18" viewBox="0 0 18 18"><circle cx="7" cy="7" r="5.500" fill="none" stroke="#777" stroke-width="1.200" /><path d="M11 11l5 6" stroke="#777" stroke-width="1.400" /></svg>
                <span>Type to locate (Ctrl+K)</span>
            </div>
            <span class="pan-msg">Pan distance 1465.169 km (67.368978°E)</span>
            <span class="st-label coord-label">Coordinate</span>
            <div class="field coord-field">96.4,27.6</div>
            <svg class="toggle-extents" width="20" height="20" viewBox="0 0 20 20"><path d="M3 2l7 0 3 4-2 3 3 3-1 6-5 0-3-6 1-3z" fill="#222" /><circle cx="9" cy="14" r="2.500" fill="#fff" /><path d="M14 3l4-1M15 6l3 0M3 5l5 3" stroke="#777" fill="none" /></svg>
            <span class="st-label scale-label">Scale</span>
            <div class="field scale-field">1:53214652<i class="combo-btn"></i></div>
            <svg class="lock" width="16" height="20" viewBox="0 0 16 20"><path d="M4 9V5a4 4 0 0 1 8 0v4" fill="none" stroke="#777" stroke-width="1.600" /><path d="M1 9h14v10H1z" fill="#5a5a5a" /></svg>
            <span class="st-label">Magnifier</span>
            <div class="field magnifier-field">100%<i class="spin"></i></div>
            <span class="st-label rotation-label">Rotation</span>
            <div class="field rotation-field">0.0 °<i class="spin"></i></div>
            <i class="check render-check"></i>
            <span class="st-label">Render</span>
            <svg class="crs-globe" width="20" height="18" viewBox="0 0 20 18"><circle cx="10" cy="9" r="7.500" fill="#ddd" stroke="#555" /><path d="M1 9h18M10 1v16M4 4h12M4 14h12M6 2c-3 4-3 10 0 14M14 2c3 4 3 10 0 14" stroke="#555" stroke-width=".8" fill="none" /></svg>
            <span class="st-label crs-label">EPSG:4326</span>
            <svg class="msg-icon" width="22" height="22" viewBox="0 0 22 22"><path d="M11 2c5.500 0 9.500 3.500 9.500 8s-4 8-9.500 8c-1 0-2 0-3-.4L3 20l1.500-4C2.500 14.500 1.500 12.500 1.500 10 1.500 5.500 5.500 2 11 2z" fill="#555" /><circle cx="7" cy="10" r="1.300" fill="#fff" /><circle cx="11" cy="10" r="1.300" fill="#fff" /><circle cx="15" cy="10" r="1.300" fill="#fff" /></svg>
        </footer>
    </div>
</body>

</html>
```

FILE: styles.css
```css
* {
    padding: 0;
    margin: 0;
    box-sizing: border-box;
}

html,
body {
    width: 1440px;
    height: 861px;
    overflow: hidden;
}

body {
    font-family: "Noto Sans", "Open Sans", sans-serif;
    font-size: 11px;
    color: #111;
    background-color: #f0f0f0;
}

b,
i {
    font-weight: normal;
    font-style: normal;
    display: block;
}

.defs {
    position: absolute;
}

.app {
    width: 1440px;
    height: 861px;
    display: flex;
    flex-direction: column;
}

/* title bar */
.titlebar {
    height: 31px;
    flex: none;
    background-color: #fff;
    display: flex;
    align-items: center;
    padding: 7px 0 0 2px;
}

.title-text {
    margin-left: 4px;
    color: #222;
}

.window-btns {
    margin-left: auto;
    display: flex;
    gap: 34px;
    padding-right: 19px;
    margin-top: -4px;
}

/* menu */
.menubar {
    height: 20px;
    flex: none;
    display: flex;
    align-items: center;
    padding: 0 0 2px 3.5px;
    background-color: #f0f0f0;
}

.menubar span {
    padding: 0 7.65px;
}

/* toolbars */
.toolbar {
    height: 39px;
    flex: none;
    display: flex;
    align-items: center;
    padding-bottom: 1px;
    border-top: 1px solid #dcdcdc;
    border-bottom: 1px solid #c4c4c4;
    background: linear-gradient(#fbfbfb, #f2f2f2);
}

.tool {
    width: 33px;
    height: 31px;
    flex: none;
    display: flex;
    align-items: center;
    justify-content: center;
}

.tool svg {
    width: 24px;
    height: 24px;
    display: block;
}

.tool.active {
    background-color: #dedede;
    border: 1px solid #b8b8b8;
    border-radius: 3px;
    width: 31px;
    margin: 0 1px;
}

.grip {
    width: 16px;
    height: 24px;
    flex: none;
    padding: 0 6px;
    background-image: radial-gradient(circle, #bcbcbc 0.7px, transparent 0.8px);
    background-size: 2px 3px;
    background-origin: content-box;
    background-clip: content-box;
}

.toolbar .grip:first-child {
    width: 12.5px;
    padding: 0 6px 0 3px;
}

.sep {
    width: 7px;
    height: 24px;
    flex: none;
    background: linear-gradient(#c8c8c8, #c8c8c8) no-repeat center / 1px 100%;
}

.arrow {
    width: 12px;
    height: 10px;
    flex: none;
    position: relative;
}

.arrow::after {
    content: "";
    position: absolute;
    left: 1px;
    top: 3px;
    border-left: 4px solid transparent;
    border-right: 4px solid transparent;
    border-top: 4px solid #555;
}

.arrow.off::after {
    border-top-color: #bbb;
}

.arrow.small {
    width: 11px;
}

.plugin-m span {
    width: 24px;
    height: 24px;
    background-color: #fff;
    display: flex;
    align-items: center;
    justify-content: center;
    font-size: 11px;
}

.icon-text {
    font: 6.5px "Noto Sans", sans-serif;
}

.icon-text-bold {
    font: bold 8px "Noto Sans", sans-serif;
}

.icon-text-big {
    font: 12px "Noto Sans", sans-serif;
}

.icon-text-i {
    font: italic bold 13px "Liberation Serif", serif;
}

.icon-text-i2 {
    font: italic bold 11px "Liberation Serif", serif;
}

.icon-text-q {
    font: bold 14px "Noto Sans", sans-serif;
}

.icon-epsilon {
    font: 13px "Liberation Sans", sans-serif;
}

/* main area */
.workspace {
    flex: 1;
    min-height: 0;
    display: flex;
}

.side {
    width: 320px;
    flex: none;
    display: flex;
    flex-direction: column;
    position: relative;
}

.v-split {
    width: 7px;
    flex: none;
}

.canvas {
    flex: 1;
    background-color: #fff;
    border: 1px solid #a8a8a8;
    overflow: hidden;
}

.map {
    display: block;
    margin-top: -1px;
}

.land path {
    fill: #bdb091;
    stroke: #232323;
    stroke-width: 1;
    shape-rendering: crispEdges;
}

.borders path,
.islands path {
    fill: none;
    stroke: #232323;
    stroke-width: 1;
    shape-rendering: crispEdges;
}

/* docks */
.dock {
    display: flex;
    flex-direction: column;
}

.browser-dock {
    height: 211px;
    flex: none;
}

.layers-dock {
    flex: 1;
    min-height: 0;
}

.dock-title {
    height: 20px;
    flex: none;
    display: flex;
    align-items: center;
    justify-content: space-between;
    padding: 0 2px 2px 4px;
}

.dock-btns {
    display: flex;
    gap: 2px;
}

.dock-tools {
    height: 30px;
    flex: none;
    display: flex;
    align-items: center;
    padding: 0 0 2px 3px;
}

.dtool {
    width: 25px;
    height: 20px;
    flex: none;
    display: flex;
    align-items: center;
    justify-content: center;
}

.dtool svg {
    width: 16px;
    height: 16px;
    display: block;
}

.dtool.wide svg {
    width: 20px;
}

.tree {
    background-color: #fff;
    border: 1px solid #ababab;
}

.browser-tree {
    height: 161px;
    flex: none;
    display: flex;
    overflow: hidden;
}

.tree-rows {
    flex: 1;
    overflow: hidden;
    font-size: 11.2px;
}

.row {
    height: 22px;
    display: flex;
    align-items: center;
    padding-left: 3px;
}

.row.sub {
    padding-left: 20px;
}

.row span {
    margin-left: 6px;
}

.ti {
    width: 20px;
    height: 20px;
    flex: none;
}

.twist {
    width: 17px;
    height: 9px;
    flex: none;
    position: relative;
}

.twist.right::after {
    content: "";
    position: absolute;
    left: 4px;
    top: 0;
    border-top: 4px solid transparent;
    border-bottom: 4px solid transparent;
    border-left: 4px solid #555;
}

.twist.down::after {
    content: "";
    position: absolute;
    left: 2px;
    top: 2px;
    border-left: 4px solid transparent;
    border-right: 4px solid transparent;
    border-top: 4px solid #555;
}

.scrollbar {
    width: 15px;
    flex: none;
    display: flex;
    flex-direction: column;
    background-color: #f0f0f0;
}

.sb-btn {
    height: 14px;
    flex: none;
    position: relative;
}

.sb-btn::after {
    content: "";
    position: absolute;
    left: 3px;
    border-left: 4px solid transparent;
    border-right: 4px solid transparent;
}

.sb-btn.up::after {
    top: 5px;
    border-bottom: 4px solid #555;
}

.sb-btn.dn::after {
    top: 5px;
    border-top: 4px solid #555;
}

.sb-thumb {
    height: 43px;
    flex: none;
    background-color: #f6f6f6;
}

.sb-track {
    flex: 1;
    background-color: #d2d2d2;
}

.h-split {
    height: 7px;
    flex: none;
    background-image: radial-gradient(circle, #b0b0b0 0.6px, transparent 0.7px);
    background-size: 3px 3px;
    background-repeat: repeat-x;
    background-position: center;
    background-clip: content-box;
    padding: 0 150px;
}

.layers-tree {
    flex: 1;
    min-height: 0;
}

.layer-row {
    height: 19px;
    display: flex;
    align-items: center;
    background-color: #efefef;
    padding-left: 28px;
}

.check {
    width: 13px;
    height: 13px;
    flex: none;
    border: 1px solid #8a8a8a;
    background-color: #fff;
    position: relative;
}

.check::after {
    content: "";
    position: absolute;
    left: 3px;
    top: 0;
    width: 5px;
    height: 9px;
    border-right: 2px solid #111;
    border-bottom: 2px solid #111;
    transform: rotate(40deg);
}

.swatch {
    width: 19px;
    height: 19px;
    flex: none;
    margin-left: 7px;
    background-color: #87a0ae;
    border: 1px solid #5f7682;
}

.layer-name {
    margin-left: 6px;
    font-weight: bold;
    text-decoration: underline;
    color: #000;
}

.highlight {
    position: absolute;
    left: 17px;
    top: 262px;
    width: 171px;
    height: 35px;
    border: 4px solid #f34b44;
}

/* status bar */
.statusbar {
    height: 33px;
    flex: none;
    display: flex;
    align-items: center;
    padding: 4px 0 1px 4px;
    border-bottom: 2px solid #2a2a2a;
    font-size: 11px;
}

.locator {
    width: 232px;
    height: 25px;
    flex: none;
    background-color: #fff;
    border: 1px solid #b5b5b5;
    border-radius: 2px;
    display: flex;
    align-items: center;
    padding-left: 8px;
    color: #8a8a8a;
    font-size: 10.2px;
}

.locator span {
    margin-left: 7px;
}

.pan-msg {
    margin-left: 7px;
    flex: 1;
    white-space: nowrap;
    font-size: 10.6px;
}

.st-label {
    flex: none;
    white-space: nowrap;
    font-size: 10.2px;
}

.crs-label {
    font-size: 10.8px;
}

.field {
    height: 25px;
    flex: none;
    background-color: #fff;
    border: 1px solid #b5b5b5;
    border-radius: 2px;
    display: flex;
    align-items: center;
    padding-left: 4px;
    position: relative;
}

.coord-field {
    width: 63px;
    margin-left: 4px;
}

.toggle-extents {
    margin-left: 3px;
    flex: none;
}

.scale-label {
    margin-left: 12px;
}

.scale-field {
    width: 94px;
    margin-left: 4px;
    padding-left: 3px;
}

.combo-btn {
    position: absolute;
    right: 0;
    top: 0;
    bottom: 0;
    width: 19px;
    border-left: 1px solid #ccc;
}

.combo-btn::after {
    content: "";
    position: absolute;
    left: 5px;
    top: 9px;
    border-left: 4px solid transparent;
    border-right: 4px solid transparent;
    border-top: 4px solid #555;
}

.lock {
    margin: 0 8px 0 12px;
    flex: none;
}

.magnifier-field {
    width: 91px;
    margin-left: 4px;
    padding-left: 3px;
}

.rotation-label {
    margin-left: 10px;
}

.rotation-field {
    width: 90px;
    margin-left: 9px;
    padding-left: 3px;
}

.spin {
    position: absolute;
    right: 0;
    top: 0;
    bottom: 0;
    width: 13px;
    border-left: 1px solid #ccc;
}

.spin::before {
    content: "";
    position: absolute;
    left: 2px;
    top: 5px;
    border-left: 4px solid transparent;
    border-right: 4px solid transparent;
    border-bottom: 4px solid #555;
}

.spin::after {
    content: "";
    position: absolute;
    left: 2px;
    top: 14px;
    border-left: 4px solid transparent;
    border-right: 4px solid transparent;
    border-top: 4px solid #555;
}

.render-check {
    margin: 0 5px 0 6px;
}

.crs-globe {
    margin-left: 16px;
    flex: none;
}

.msg-icon {
    margin: 0 6px 0 22px;
    flex: none;
}
```
